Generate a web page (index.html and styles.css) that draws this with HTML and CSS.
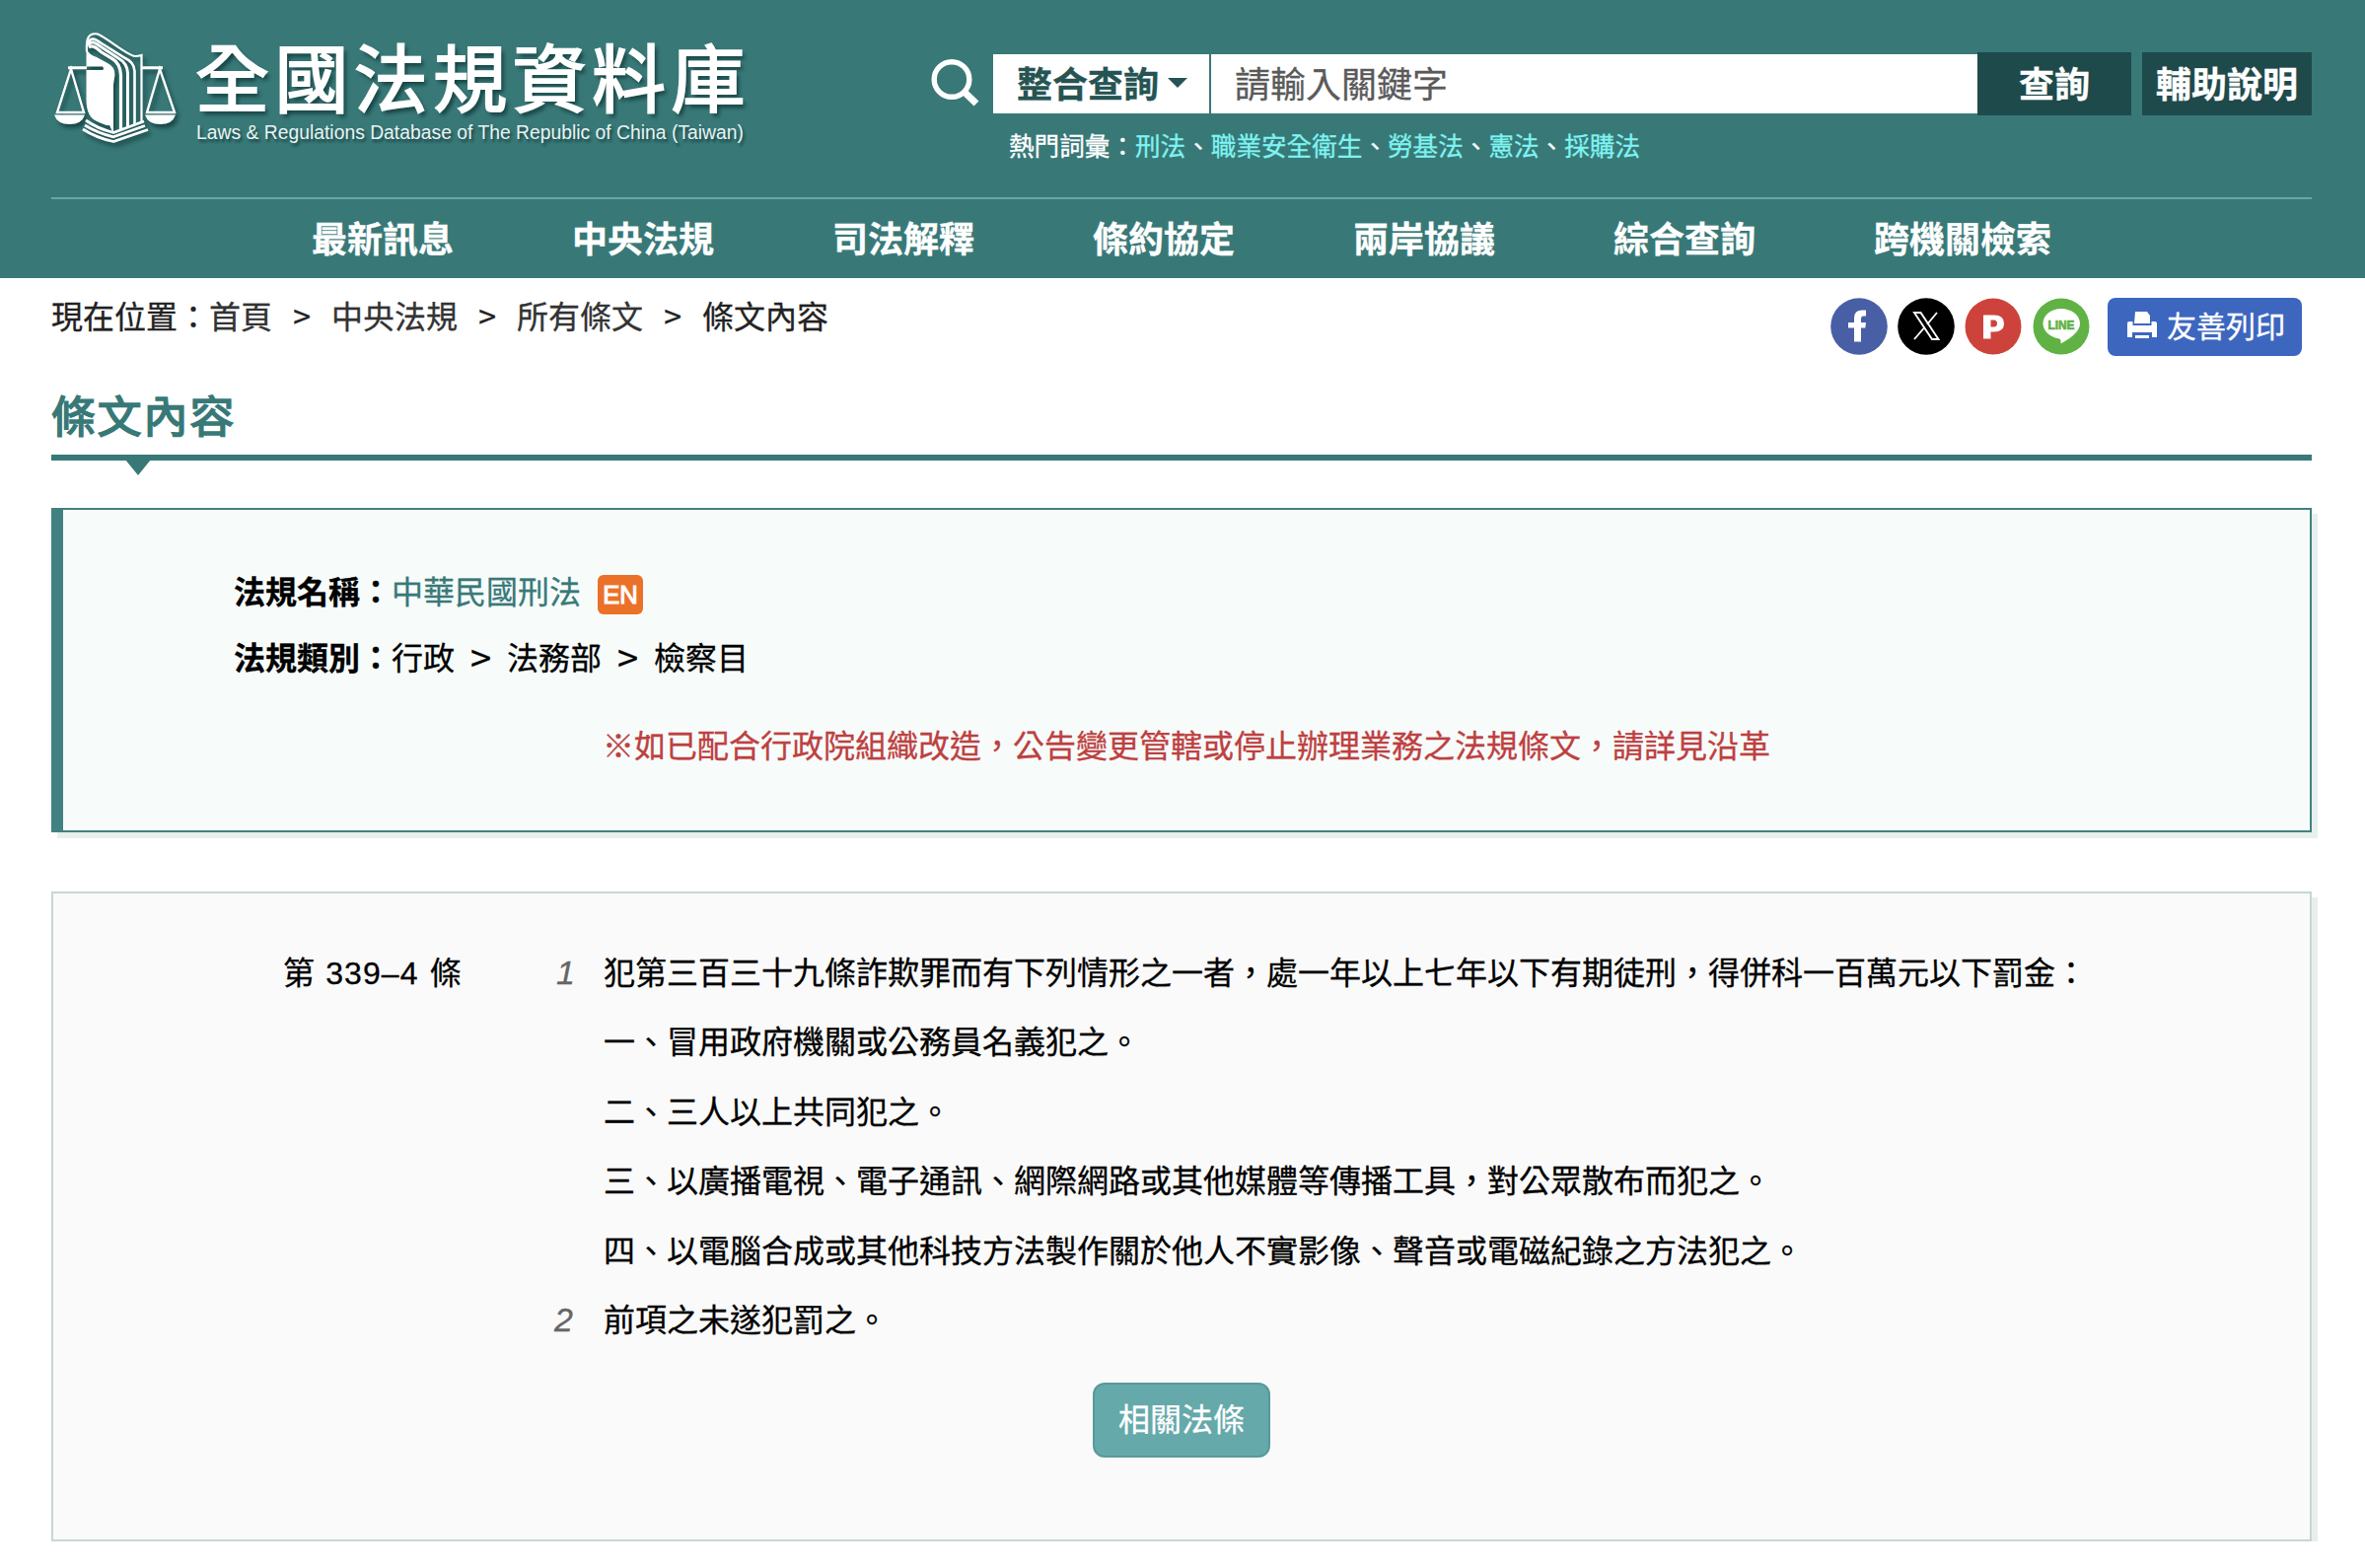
FILE: index.html
```html
<!DOCTYPE html>
<html lang="zh-Hant">
<head>
<meta charset="utf-8">
<title>條文內容 - 全國法規資料庫</title>
<link rel="stylesheet" href="styles.css">
</head>
<body>
<header class="header">
  <div class="header-top">
    <a class="logo">
      <svg class="logo-mark" viewBox="22 18 132 122" width="132" height="122" fill="none" stroke="#fff">
        <path d="M39 58.7H58M113 58.7H135" stroke-width="3"/>
        <path d="M42 60 28 104H55ZM132 60 119 104H147Z" stroke-width="2.4"/>
        <path d="M25 106.500H56Q53 116 40.500 116T25 106.500ZM117 106.500H148Q145 116 132.500 116T117 106.500Z" fill="#fff" stroke="none"/>
        <path d="M57.500 40Q60 45 68 48L79 54Q87 58 86.500 66L85 76V126L81 117Q78 118 68 113Q58 109 57.500 92V61H74Q76 60 74 57.500H57.500Z" fill="#fff" stroke="none"/>
        <path d="M58 43C57 28 60 23 69 24.500C78 28 100 47 107 47Q110 47 113.500 46V114" stroke-width="2.200"/>
        <path d="M59 35C61 27 66 29 73 34L97 49Q106 53 106.500 62V116" stroke-width="2.600"/>
        <path d="M59 36C63 30 67 34 73 38L90 49Q99 54 99.500 64V119" stroke-width="3"/>
        <path d="M60 38C64 35 68 39 73 43L83 49Q92 54 92.500 66V122" stroke-width="3.200"/>
        <path d="M57 112Q68 120 85 124.500L116 113M56 117Q69 125 85 128.800L117 117.500M54 121Q68 130 85 133.500L120 121.500" stroke-width="2.800"/>
      </svg>
      <span class="logo-text">
        <span class="logo-title">全國法規資料庫</span>
        <svg class="logo-sub" width="560" height="28"><text x="0" y="19" textLength="555" lengthAdjust="spacingAndGlyphs">Laws &amp; Regulations Database of The Republic of China (Taiwan)</text></svg>
      </span>
    </a>
    <div class="search">
      <div class="search-row">
        <svg class="search-icon" width="50" height="48" viewBox="0 0 50 48" fill="none" stroke="#fff"><circle cx="21" cy="20.500" r="17.800" stroke-width="5.400"/><path d="M33 32.500 46 45" stroke-width="7"/></svg>
        <div class="select">整合查詢<i class="caret"></i></div>
        <div class="keyword">請輸入關鍵字</div>
        <div class="btn btn-query">查詢</div>
        <div class="btn btn-help">輔助說明</div>
      </div>
      <div class="hot">熱門詞彙：<a>刑法</a>、<a>職業安全衛生</a>、<a>勞基法</a>、<a>憲法</a>、<a>採購法</a></div>
    </div>
  </div>
  <nav class="nav"><a>最新訊息</a><a>中央法規</a><a>司法解釋</a><a>條約協定</a><a>兩岸協議</a><a>綜合查詢</a><a>跨機關檢索</a></nav>
</header>
<main class="main">
  <div class="topbar">
    <div class="crumbs">現在位置：<a>首頁</a><i>&gt;</i><a>中央法規</a><i>&gt;</i><a>所有條文</a><i>&gt;</i><span>條文內容</span></div>
    <div class="share">
      <svg width="58" height="58" viewBox="0 0 58 58"><circle cx="29" cy="29" r="28.800" fill="#485fa5"/><path d="M24 44.500V30.500H18V25H24V20.500Q24 12.500 32 12.500H36V18.500H33.500Q31 18.500 31 21.500V25H36L35.300 30.500H31V44.500Z" fill="#fff"/></svg>
      <svg width="58" height="58" viewBox="0 0 58 58"><circle cx="29" cy="29" r="28.800" fill="#000"/><path d="M17 15H23.500L41.500 42H35ZM40 15 30 27M27 30.500 17 42" fill="none" stroke="#fff" stroke-width="1.900"/></svg>
      <svg width="58" height="58" viewBox="0 0 58 58"><circle cx="29" cy="29" r="28.500" fill="#cd433c"/><path fill-rule="evenodd" d="M19 17.500H30Q40 17.500 40 26T30 34.500H26.500V41.500H19ZM26.500 22.500V29.500H29.500Q33 29.500 33 26T29.500 22.500Z" fill="#fff"/></svg>
      <svg width="58" height="58" viewBox="0 0 58 58"><circle cx="29" cy="29" r="28.500" fill="#60b244"/><path d="M29 11C19 11 10.500 17.500 10.500 26C10.500 34 18 40 27 41.500Q29 42 28.500 46.500Q48 36 48 26C48 17.500 39 11 29 11Z" fill="#fff"/><text class="line-word" x="29" y="31.500" text-anchor="middle" textLength="27" lengthAdjust="spacingAndGlyphs">LINE</text></svg>
      <a class="print">
        <svg width="30" height="28" viewBox="0 0 30 28" fill="#fff"><path d="M8 0H20L23 4V12H7Z"/><path d="M0 12Q0 10 2 10H5.500V14H24.500V10H28Q30 10 30 12V26H25V21H5V26H0Z"/><path d="M8 24H22V27H8Z"/></svg>
        友善列印
      </a>
    </div>
  </div>
  <h1 class="title">條文內容</h1>
  <section class="info">
    <div class="info-row"><b>法規名稱：</b><a class="law">中華民國刑法</a><span class="en">EN</span></div>
    <div class="info-row"><b>法規類別：</b>行政<i>&gt;</i>法務部<i>&gt;</i>檢察目</div>
    <p class="notice">※如已配合行政院組織改造，公告變更管轄或停止辦理業務之法規條文，請詳見沿革</p>
  </section>
  <section class="article">
    <div class="article-grid">
      <div class="number">第 <span>339–4</span> 條</div>
      <div class="idx">1</div><div class="line">犯第三百三十九條詐欺罪而有下列情形之一者，處一年以上七年以下有期徒刑，得併科一百萬元以下罰金：</div>
      <div class="line sub">一、冒用政府機關或公務員名義犯之。</div>
      <div class="line sub">二、三人以上共同犯之。</div>
      <div class="line sub">三、以廣播電視、電子通訊、網際網路或其他媒體等傳播工具，對公眾散布而犯之。</div>
      <div class="line sub">四、以電腦合成或其他科技方法製作關於他人不實影像、聲音或電磁紀錄之方法犯之。</div>
      <div class="idx second">2</div><div class="line">前項之未遂犯罰之。</div>
    </div>
    <a class="related">相關法條</a>
  </section>
</main>
</body>
</html>
```

FILE: styles.css
```css
* { box-sizing: border-box; }
body {
  margin: 0;
  background: #fff;
  color: #000;
  font: 32px/1.5 "Noto Sans CJK TC", sans-serif;
  -webkit-text-stroke: .3px currentColor;
}
svg { display: block; flex: none; }
i { font-style: normal; }

.header { height: 282px; padding: 0 54px 0 52px; background: #387978; color: #fff; }
.header-top { display: flex; height: 202px; border-bottom: 2px solid #6ba6a6; }

.logo { display: flex; width: 892px; padding-top: 28px; }
.logo-mark { filter: drop-shadow(3px 4px 2px rgba(0, 30, 30, .55)); }
.logo-text { padding: 8px 0 0 14px; }
.logo-title {
  display: block;
  height: 86px;
  font-size: 75px;
  line-height: 80px;
  letter-spacing: 5.4px;
  white-space: nowrap;
  text-shadow: 3px 4px 4px rgba(0, 30, 30, .65);
  -webkit-text-stroke: 2px #fff;
}
.logo-sub { margin-left: 1px; overflow: visible; }
.logo-sub text {
  font: 20px "Liberation Sans", sans-serif;
  fill: #e8f3f2;
  text-shadow: 2px 3px 3px rgba(0, 30, 30, .6);
  -webkit-text-stroke: 0;
}

.search { flex: 1; padding-top: 53px; }
.search-row { display: flex; align-items: center; height: 64px; font-size: 36px; }
.search-icon { margin: -2px 13px 0 0; }
.select {
  display: flex;
  align-items: center;
  width: 219px;
  height: 60px;
  padding: 0 0 4px 24px;
  background: #fff;
  color: #265453;
  font-weight: 700;
}
.caret {
  margin: 2px 0 0 9px;
  border: 10px solid transparent;
  border-top-color: #265453;
  border-bottom: 0;
}
.keyword {
  flex: 1;
  height: 60px;
  margin-left: 2px;
  padding-left: 24px;
  background: #fff;
  color: #5a5a5a;
  line-height: 56px;
}
.btn { height: 64px; background: #1f4a4b; font-weight: 700; line-height: 60px; text-align: center; }
.btn-query { width: 156px; }
.btn-help { width: 172px; margin-left: 11px; }
.hot { padding: 10px 0 0 79px; font-size: 25.6px; line-height: 40px; }
.hot a { color: #7ff3f1; }

.nav {
  display: flex;
  gap: 120px;
  padding-left: 264px;
  font-size: 36px;
  font-weight: 700;
  line-height: 76px;
}

.main { padding: 0 54px 0 52px; }
.topbar { display: flex; justify-content: space-between; height: 98px; padding: 20px 10px 0 0; }
.crumbs { display: flex; height: 36px; color: #222; line-height: 35px; }
.crumbs a { color: #333; }
.crumbs i { width: 60px; text-align: center; }
.share { display: flex; gap: 10.300px; }
.line-word { font: 700 13px "Liberation Sans", sans-serif; fill: #60b244; stroke: #60b244; stroke-width: .7px; -webkit-text-stroke: .7px #60b244; }
.print {
  display: flex;
  align-items: center;
  width: 197px;
  height: 59px;
  margin: 0 0 0 8px;
  padding: 0 0 4px 20px;
  border-radius: 8px;
  background: #3d66bf;
  color: #fff;
  font-size: 30px;
  gap: 10px;
}

.title {
  position: relative;
  height: 87px;
  margin: 0 0 48px;
  border-bottom: 6px solid #387978;
  color: #387978;
  font-size: 44.800px;
  font-weight: 400;
  line-height: 80px;
  letter-spacing: 2px;
  -webkit-text-stroke: 1.700px #387978;
}
.title::after {
  content: "";
  position: absolute;
  left: 75px;
  top: 86px;
  border: 13px solid transparent;
  border-top: 16px solid #387978;
  border-bottom: 0;
}

.info {
  height: 329px;
  padding: 48px 0 0 173px;
  border: 2px solid #418280;
  border-left-width: 12px;
  background: #f7fcfb;
  box-shadow: 6px 6px 0 #e7f0ee;
}
.info-row { display: flex; height: 67px; line-height: 67px; }
.info-row i { width: 53px; font-size: 38px; text-align: center; }
.law { color: #387978; }
.en {
  width: 46px;
  height: 40px;
  margin: 18px 0 0 17px;
  border-radius: 6px;
  background: #eb7129;
  color: #fff;
  font: 500 25.600px/40px "Liberation Sans", sans-serif;
  text-align: center;
  -webkit-text-stroke: 1.100px #fff;
}
.notice { margin: 22px 0 0 374px; color: #be4040; line-height: 66px; }

.article {
  height: 659px;
  margin-top: 60px;
  padding-top: 43px;
  border: 2px solid #c4d8d5;
  background: #fafafa;
  box-shadow: 6px 6px 0 #e9eeed;
}
.article-grid {
  display: grid;
  grid-template-columns: 476px 53px 1fr;
  grid-auto-rows: 70.400px;
  line-height: 70px;
}
.number { padding-left: 233px; word-spacing: 4px; white-space: nowrap; }
.number span, .idx { font-family: "Liberation Sans", sans-serif; }
.number span { letter-spacing: 1.100px; }
.idx {
  padding-top: 2px;
  color: #666;
  font-size: 34px;
  font-style: italic;
  text-align: right;
}
.second { grid-column: 2; padding-right: 2px; }
.line { padding-left: 29px; white-space: nowrap; }
.sub { grid-column: 3; }
.related {
  display: block;
  width: 180px;
  height: 76px;
  margin: 31px auto 0;
  border: 2px solid #5a999b;
  border-radius: 12px;
  background: #65a9ab;
  color: #fff;
  line-height: 67px;
  text-align: center;
}
```
